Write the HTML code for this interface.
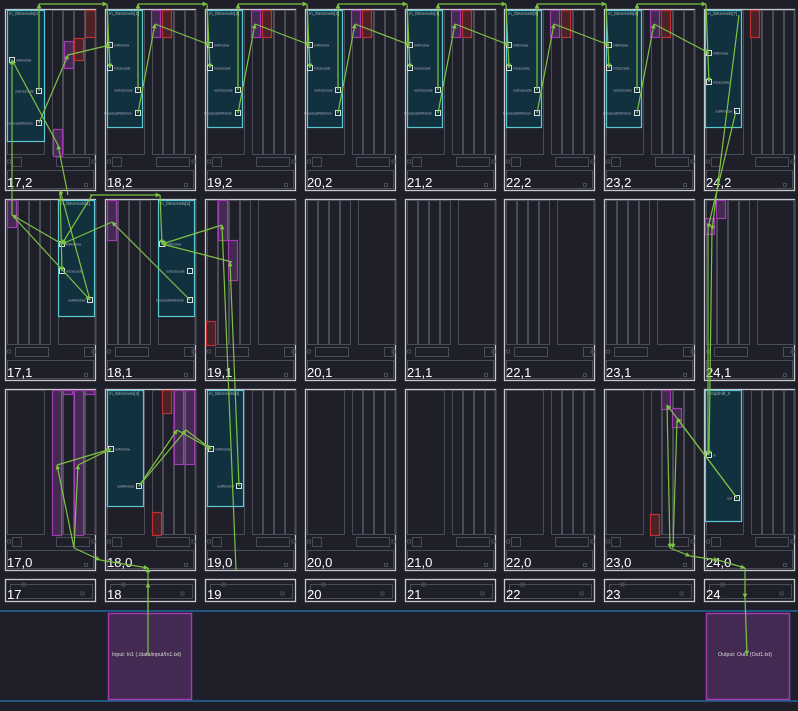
<!DOCTYPE html>
<html><head><meta charset="utf-8"><style>
html,body{margin:0;padding:0;background:#1f1f29;width:798px;height:711px;overflow:hidden}
svg{display:block}
text{font-family:"Liberation Sans",sans-serif}
</style></head><body>
<svg id="s" width="798" height="711" xmlns="http://www.w3.org/2000/svg"></svg>
<script>
var X=[5,105,205,305,405,504,604,704],N=[17,18,19,20,21,22,23,24];
var o='<defs><marker id="a" viewBox="0 0 10 10" refX="9" refY="5" markerWidth="4" markerHeight="4" orient="auto"><path d="M0,0L10,5L0,10z" fill="#7dc243"/></marker></defs>';
o+='<rect width="798" height="711" fill="#1f1f29"/>';
function R(x,y,w,h,s,f,sw){o+='<rect x="'+x+'" y="'+y+'" width="'+w+'" height="'+h+'" fill="'+(f||'none')+'" stroke="'+s+'" stroke-width="'+(sw||1)+'"/>';}
function T(x,y,t,sz,c){o+='<text x="'+x+'" y="'+y+'" font-size="'+sz+'" fill="'+(c||'#fff')+'">'+t+'</text>';}
var G='#4a4d58';
function tile(x,y,row){
  R(x+.5,y+.5,90,181,'#c9c9cc','none',1.3);
  var cols,big;
  if(row==1){cols=[2,13,24,35];big=[53,37];}else{cols=[47,58,69,80];big=[2,37];}
  R(x+big[0]+.5,y+1.5,big[1],144,G);
  for(var i=0;i<4;i++)R(x+cols[i]+.5,y+1.5,10,144,G);
  if(row==1){R(x+10.5,y+148.5,33,9,G);R(x+79.5,y+148.5,9,9,G);}
  else{R(x+7.5,y+148.5,9,9,G);R(x+51.5,y+148.5,33,9,G);}
  R(x+2.5,y+151,3,3,G);R(x+87,y+151,3,3,G);
  R(x+2.5,y+161.5,86,18,G);
  R(x+79.5,y+174.5,3,3,G);
}
for(var r=0;r<3;r++){var y=[9,199,389][r],row=2-r;
 for(var i=0;i<8;i++){tile(X[i],y,row);T(X[i]+2,y+178,N[i]+','+row,13);}}
for(var i=0;i<8;i++){R(X[i]+.5,579.5,90,22,'#c9c9cc','none',1.3);R(X[i]+5.5,584.5,82,14,G);R(X[i]+17,583,3,3,G);R(X[i]+76,592,3,3,G);T(X[i]+2,599,N[i],13);}
o+='<line x1="0" y1="611" x2="798" y2="611" stroke="#1d6a9c" stroke-width="1.5"/><line x1="0" y1="701" x2="798" y2="701" stroke="#1d6a9c" stroke-width="1.5"/>';
R(108.5,613.5,83,86,'#a23ab0','#432a52',1.5);T(112,656,'Input: In1 (./data/input/In1.txt)',5.3,'#ddd');
R(706.5,613.5,83,86,'#a23ab0','#432a52',1.5);T(718,656,'Output: Out1 (Out1.txt)',5.3,'#ddd');
var TE='#5cc8d0',TF='#12313f';
function teal(x,y,w,h,nm){R(x+.5,y+.5,w,h,TE,TF,1.2);T(x+2,y+5,nm,4.5,'#9bb');}
function port(x,y,l,left){R(x-2.5,y-2.5,5,5,'#ddd','none',1);T(left?x+4:x-4-l.length*2,y+1.5,l,3.5,'#aab');}
function mag(x,y,w,h,c,f){R(x+.5,y+.5,w,h,c,f,1.2);}
teal(7,10,37,131,'m_tbKernels[0]');port(12,60,'inWindow',1);port(39,91,'outCascade');port(39,123,'broadcastWindow');
mag(53,129,9,27,'#a23ab0','#432a52');mag(64,41,9,27,'#a23ab0','#432a52');mag(74,38,9,22,'#c03030','#4a2228');mag(85,10,10,27,'#c03030','#4a2228');
for(var i=1;i<8;i++){var x=X[i];
 if(i<7){teal(x+2,10,35,117,'m_tbKernels['+i+']');port(x+5,45,'inWindow',1);port(x+5,68,'inCascade',1);port(x+33,90,'outCascade');port(x+33,113,'broadcastWindow');
 mag(x+46,10,9,27,'#a23ab0','#432a52');mag(x+57,10,9,27,'#c03030','#4a2228');}
 else{teal(x+1,10,36,117,'m_tbKernels[7]');port(x+5,53,'inWindow',1);port(x+5,82,'inCascade',1);port(x+33,111,'outWindow');mag(x+46,10,9,27,'#c03030','#4a2228');}}
teal(58,200,36,116,'m_tbKernels[1]');port(62,244,'inWindow',1);port(62,271,'inCascade',1);port(90,300,'outWindow');
teal(158,200,36,116,'m_tbKernels[2]');port(162,244,'inWindow',1);port(190,271,'outCascade');port(190,300,'broadcastWindow');
mag(7,200,9,27,'#a23ab0','#432a52');mag(107,200,9,40,'#a23ab0','#432a52');mag(218,200,9,40,'#a23ab0','#432a52');mag(228,240,9,40,'#a23ab0','#432a52');mag(206,321,9,24,'#c03030','#4a2228');
mag(705,218,9,16,'#a23ab0','#432a52');mag(716,200,9,18,'#a23ab0','#432a52');
teal(107,390,36,116,'m_tbKernels[3]');port(111,449,'inWindow',1);port(139,486,'outWindow');
teal(207,390,36,116,'m_tbKernels[4]');port(211,449,'inWindow',1);port(239,486,'outWindow');
teal(705,390,36,131,'FreqShift_0');port(709,455,'in',1);port(737,498,'out');
mag(52,390,9,145,'#a23ab0','#432a52');mag(74,390,9,145,'#a23ab0','#432a52');mag(63,390,9,4,'#a23ab0','#432a52');mag(85,390,9,4,'#a23ab0','#432a52');
mag(162,390,9,23,'#c03030','#4a2228');mag(174,390,9,74,'#a23ab0','#432a52');mag(185,390,9,74,'#a23ab0','#432a52');mag(152,512,9,23,'#c03030','#4a2228');
mag(661,390,9,19,'#a23ab0','#432a52');mag(672,408,9,19,'#a23ab0','#432a52');mag(650,514,9,21,'#c03030','#4a2228');
function L(p){o+='<polyline points="'+p+'" fill="none" stroke="#7dc243" stroke-width="1.2" marker-end="url(#a)"/>';}
for(var i=0;i<7;i++){var x=X[i],nx=X[i+1];var ox=i==0?39:x+33;var oy=i==0?91:90;
 L(ox+','+oy+' '+ox+',4');L(ox+',4 '+(nx+2)+',4');L((nx+2)+',4 '+(nx+5)+','+(i==6?82:68));
 var mx=i==0?68:x+50,my=i==0?55:24;L((i==0?39:x+33)+','+(i==0?123:113)+' '+mx+','+my);L(mx+','+my+' '+(nx+5)+','+(i==6?53:45));}
L('12,215 12,60');L('58,145 12,60');L('68,195 58,145');L('90,195 160,195');
L('62,244 12,215');L('12,215 90,300');L('90,300 60,190');L('60,190 62,271');L('92,195 62,244');
L('160,195 162,244');L('190,300 112,222');L('112,222 62,244');L('232,262 162,244');L('222,225 162,244');
L('236,570 222,225');L('239,486 230,262');L('739,15 712,230');L('736,111 708,228');L('708,228 708,455');L('712,230 709,455');
L('57,465 111,449');L('74,548 57,465');L('74,548 78,465');L('78,465 111,449');L('139,486 177,430');L('139,486 186,430');L('186,430 211,449');L('177,430 211,449');
L('74,548 100,560');L('100,560 148,568');L('148,611 148,583');L('148,655 148,568');
L('737,498 667,405');L('667,405 670,548');L('677,420 673,548');L('670,548 690,556');L('690,556 718,560');L('718,560 745,568');L('745,568 745,598');L('745,598 747,655');L('737,498 677,418');
document.getElementById('s').innerHTML=o;
</script>
</body></html>
